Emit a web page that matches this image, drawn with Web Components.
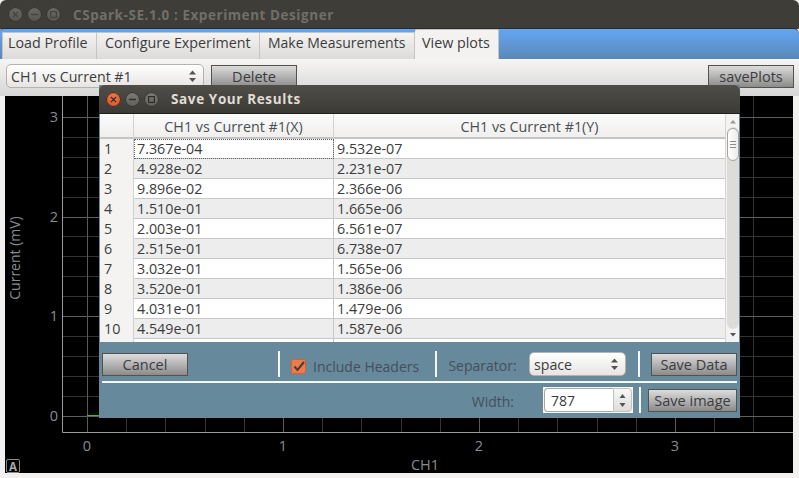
<!DOCTYPE html>
<html>
<head>
<meta charset="utf-8">
<title>CSpark-SE.1.0 : Experiment Designer</title>
<style>
html, body { margin: 0; padding: 0; height: 478px; overflow: hidden; background: #f2f1f0; }
body { font-family: "Open Sans", "Noto Sans", sans-serif; font-size: 14px; color: #3c3c3c; }
</style>
</head>
<body>
<app-window></app-window>
<script>
const UI_FONT = '"Open Sans", "Noto Sans", sans-serif';

// three round window buttons
class WinButtons extends HTMLElement {
    constructor() {
        super();
        this.attachShadow({mode: 'open'});
        const active = this.hasAttribute('active');
        const a = active ? '#2f2e2a' : '#44433f';
        const grey = active ? 'linear-gradient(#7d7c76, #5f5e59)' : 'linear-gradient(#6a6964, #565550)';
        this.shadowRoot.innerHTML = `
        <style>
        :host { display: flex; gap: 4px; align-items: center; }
        .b { width: 15px; height: 15px; border-radius: 50%; background: ${grey}; box-shadow: 0 0 0 1px #33322e inset; flex: none; display: block; }
        .b.close { background: ${active ? 'radial-gradient(circle at 50% 35%, #f0784a, #d8481f)' : grey}; }
        svg { display: block; }
        </style>
        <span class="b close"><svg width="15" height="15" fill="none" stroke="${a}" stroke-width="1.2"><path d="M5 5l5 5M10 5l-5 5"/></svg></span>
        <span class="b"><svg width="15" height="15" fill="none" stroke="${a}" stroke-width="1.4"><path d="M4 7.5h7"/></svg></span>
        <span class="b"><svg width="15" height="15" fill="none" stroke="${a}" stroke-width="1.2"><rect x="4.6" y="4.6" width="5.8" height="5.8"/></svg></span>`;
    }
}
customElements.define('win-buttons', WinButtons);

class QtButton extends HTMLElement {
    constructor() {
        super();
        this.attachShadow({mode: 'open'});
        this.shadowRoot.innerHTML = `
        <style>
        :host { display: flex; align-items: center; justify-content: center; box-sizing: border-box; flex: none;
            height: 23px; border: 1px solid #55524e; background: linear-gradient(#dcdcdc, #8b8b8b); color: #3c3c3c;
            font: 14.5px ${UI_FONT}; white-space: nowrap; }
        </style>
        <slot></slot>`;
    }
}
customElements.define('qt-button', QtButton);

// combo box with the small up/down arrows
class ComboBox extends HTMLElement {
    constructor() {
        super();
        this.attachShadow({mode: 'open'});
        this.shadowRoot.innerHTML = `
        <style>
        :host { display: flex; align-items: center; justify-content: space-between; box-sizing: border-box; flex: none;
            height: 24px; padding: 0 6px 0 4px; border: 1px solid #b5b2ac; border-radius: 5px;
            background: linear-gradient(#ffffff, #e6e5e3); color: #3c3c3c; font: 14.2px ${UI_FONT}; white-space: nowrap; }
        svg { display: block; flex: none; }
        </style>
        <slot></slot>
        <svg width="9" height="14" fill="#55534f"><path d="M4.5 1.5L8 5.5H1zM1 9h7l-3.500 4z"/></svg>`;
    }
}
customElements.define('combo-box', ComboBox);

class SpinBox extends HTMLElement {
    constructor() {
        super();
        this.attachShadow({mode: 'open'});
        this.shadowRoot.innerHTML = `
        <style>
        :host { display: flex; box-sizing: border-box; flex: none; width: 90px; height: 26px; padding: 1px; background: #f6f6f5;
            color: #3c3c3c; font: 14px ${UI_FONT}; }
        .edit { flex: 1; box-sizing: border-box; border: 1px solid #a9a69f; border-right: 0; border-radius: 4px 0 0 4px; background: #fff; padding-left: 6px; line-height: 24px; }
        .arrows { width: 17px; border: 1px solid #c4c2bc; border-radius: 0 4px 4px 0; background: linear-gradient(#f8f8f7, #dddcd9); display: flex; align-items: center; justify-content: center; }
        svg { display: block; }
        </style>
        <div class="edit"><slot></slot></div>
        <div class="arrows"><svg width="9" height="18" fill="#55534f"><path d="M4.500 3L7.500 7H1.500zM1.500 12h6l-3 4z"/></svg></div>`;
    }
}
customElements.define('spin-box', SpinBox);

class VRule extends HTMLElement {
    constructor() {
        super();
        this.attachShadow({mode: 'open'});
        this.shadowRoot.innerHTML = `<style>:host { display: block; flex: none; width: 2px; height: 26px; background: #f4f6f7; }</style>`;
    }
}
customElements.define('v-rule', VRule);

class TabBar extends HTMLElement {
    constructor() {
        super();
        this.attachShadow({mode: 'open'});
        this.shadowRoot.innerHTML = `
        <style>
        :host { display: flex; align-items: flex-end; box-sizing: border-box; height: 31px; padding: 0 3px 0 2px; margin-top: -1px;
            background: linear-gradient(#64a6f5, #5a88b4); border-top: 1px solid #2a2925; border-radius: 4px 6px 0 0; }
        .tab { box-sizing: border-box; height: 27px; padding: 0 6px 0 7px; background: linear-gradient(#f4f3f2, #dcdbd9);
            border: 1px solid #c6c4bf; border-bottom: 0; border-left: 0; font: 14.3px ${UI_FONT}; color: #3c3c3c; white-space: nowrap; }
        .tab.on { height: 30px; background: #f3f2f1; border-radius: 2px 2px 0 0; padding: 3px 0 0 7px; }
        </style>
        <div class="tab" style="width:95px;padding-left:5px;border-left:1px solid #c6c4bf">Load Profile</div>
        <div class="tab" style="width:163px;padding-left:8px">Configure Experiment</div>
        <div class="tab" style="width:155px;padding-left:8px;font-size:14px">Make Measurements</div>
        <div class="tab on" style="width:84px">View plots</div>`;
    }
}
customElements.define('tab-bar', TabBar);

// the dark plot, drawn on its own canvas of coordinates
class PlotView extends HTMLElement {
    constructor() {
        super();
        this.attachShadow({mode: 'open'});
        let grid = '';
        // origin of the svg is page (5,96)
        for (let i = 1; i < 18; i++) {
            const x = 82 + i * 39.2;
            const major = i % 5 === 0;
            grid += `<path d="M${Math.round(x) + .5} 0V336" stroke="${major ? '#5a5a5a' : '#333'}"/>`;
        }
        for (let i = 0; i < 16; i++) {
            const y = 320 - i * 19.95;
            const major = i % 5 === 0;
            grid += `<path d="M57 ${Math.round(y) + .5}H788" stroke="${major ? '#5f5f5f' : '#333'}"/>`;
        }
        this.shadowRoot.innerHTML = `
        <style>
        :host { display: block; flex: none; width: 788px; height: 377px; background: #000; }
        svg { display: block; overflow: visible; }
        text { font-family: ${UI_FONT}; font-size: 14.500px; fill: #868b92; }
        </style>
        <svg width="788" height="377">
            ${grid}
            <path d="M82.500 0V336" stroke="#5a5a5a"/>
            <path d="M57.500 0V336.500H788" fill="none" stroke="#9a9a9a"/>
            <path d="M82 319.500H94" stroke="#2fc22f"/>
            <text x="53" y="26" text-anchor="end">3</text>
            <text x="53" y="126" text-anchor="end">2</text>
            <text x="53" y="225" text-anchor="end">1</text>
            <text x="53" y="325" text-anchor="end">0</text>
            <text x="82" y="355" text-anchor="middle">0</text>
            <text x="278" y="355" text-anchor="middle">1</text>
            <text x="474" y="355" text-anchor="middle">2</text>
            <text x="670" y="355" text-anchor="middle">3</text>
            <text x="420" y="374" text-anchor="middle">CH1</text>
            <text transform="translate(15 162) rotate(-90)" text-anchor="middle" style="font-size:14px">Current (mV)</text>
            <rect x="1.500" y="363.500" width="13" height="13" rx="1.500" fill="none" stroke="#8a8a8a"/>
            <text x="8" y="374.500" text-anchor="middle" style="font-size:11.500px;font-weight:700;fill:#a8a8a8">A</text>
        </svg>`;
    }
}
customElements.define('plot-view', PlotView);

// spreadsheet with header, row numbers and a scrollbar
class DataTable extends HTMLElement {
    constructor() {
        super();
        this.attachShadow({mode: 'open'});
        const data = [
            ['7.367e-04', '9.532e-07'], ['4.928e-02', '2.231e-07'], ['9.896e-02', '2.366e-06'],
            ['1.510e-01', '1.665e-06'], ['2.003e-01', '6.561e-07'], ['2.515e-01', '6.738e-07'],
            ['3.032e-01', '1.565e-06'], ['3.520e-01', '1.386e-06'], ['4.031e-01', '1.479e-06'],
            ['4.549e-01', '1.587e-06'], ['', '']
        ];
        const rows = data.map((r, i) => `
            <div class="row ${i % 2 ? 'alt' : ''}">
                <div class="num">${i < 10 ? i + 1 : ''}</div>
                <div class="c1 ${i === 0 ? 'focus' : ''}">${r[0]}</div>
                <div class="c2">${r[1]}</div>
            </div>`).join('');
        this.shadowRoot.innerHTML = `
        <style>
        :host { display: flex; flex: none; height: 228px; margin: 0 1px; background: #fff; overflow: hidden; font: 14.300px ${UI_FONT}; color: #3c3c3c; }
        .grid { flex: 1; min-width: 0; overflow: hidden; }
        .head { display: grid; grid-template-columns: 34px 200px 1fr; height: 25px; box-sizing: border-box; border-bottom: 2px solid #c4c4c4; background: linear-gradient(#fbfbfb, #f0efee); color: #4a4f55; text-align: center; line-height: 25px; }
        .head div { box-sizing: border-box; border-right: 1px solid #d2d2d2; }
        .head div:last-child { border-right: 0; }
        .row { display: grid; grid-template-columns: 34px 200px 1fr; height: 20px; box-sizing: border-box; border-bottom: 1px solid #c8c8c8; line-height: 20px; background: #fff; }
        .row.alt { background: #ededed; }
        .num { background: #f4f3f2; padding-left: 4px; border-right: 1px solid #d2d2d2; }
        .c1 { padding-left: 3px; border-right: 1px solid #c8c8c8; box-sizing: border-box; }
        .c2 { padding-left: 3px; }
        .focus { outline: 1px dotted #666; outline-offset: -1px; }
        .bar { width: 14px; flex: none; box-sizing: border-box; border-left: 1px solid #d8d6d2; background: #f4f3f2; display: flex; flex-direction: column; align-items: center; }
        .bar svg { display: block; flex: none; }
        .trough { flex: 1; width: 12px; background: #dedcd8; border-radius: 6px; }
        .thumb { box-sizing: border-box; width: 12px; height: 33px; margin-top: 1px; border: 1px solid #a8a59f; border-radius: 6px; background: linear-gradient(90deg, #fff, #ecebe9); display: flex; align-items: center; justify-content: center; }
        .step { height: 13px; }
        </style>
        <div class="grid">
            <div class="head"><div></div><div>CH1 vs Current #1(X)</div><div>CH1 vs Current #1(Y)</div></div>
            ${rows}
        </div>
        <div class="bar">
            <svg class="step" width="12" height="13" fill="#9a9893"><path d="M6 6l3 3.500H3z"/></svg>
            <div class="trough"><div class="thumb"><svg width="6" height="7" stroke="#8d8b86"><path d="M0 .5H6M0 3.500H6M0 6.500H6"/></svg></div></div>
            <svg class="step" width="12" height="13" fill="#55534f"><path d="M3 4h6l-3 3.500z"/></svg>
        </div>`;
    }
}
customElements.define('data-table', DataTable);

class SaveDialog extends HTMLElement {
    constructor() {
        super();
        this.attachShadow({mode: 'open'});
        this.shadowRoot.innerHTML = `
        <style>
        :host { position: absolute; left: 99px; top: 85px; width: 641px; height: 333px; background: #66899b; display: flex; flex-direction: column; font: 14px ${UI_FONT}; }
        .title { display: flex; align-items: center; flex: none; height: 29px; box-sizing: border-box; padding: 0 0 0 7px; background: linear-gradient(#504e47, #3b3a36); border-radius: 6px 6px 0 0; border-bottom: 1px solid #1f1e1b; color: #e0ddd6; font-weight: 700; font-size: 13.500px; letter-spacing: .62px; }
        .title span { margin-left: 12px; }
        .lab { color: #44505a; white-space: nowrap; }
        .r1 { display: flex; align-items: center; flex: none; box-sizing: border-box; height: 39px; padding: 5px 3px 0; }
        .line { flex: none; height: 2px; margin: 0 3px 0 3px; background: #f4f6f7; }
        .r2 { display: flex; align-items: center; flex: none; box-sizing: border-box; height: 35px; padding: 0 3px 1px; justify-content: flex-end; }
        .check { box-sizing: border-box; width: 15px; height: 15px; background: #ee7b4e; border: 1px solid #d0623a; border-radius: 2px; flex: none; margin: 4px 7px 0 11px; }
        .check svg { display: block; }
        </style>
        <div class="title"><win-buttons active></win-buttons><span>Save Your Results</span></div>
        <data-table></data-table>
        <div class="r1">
            <qt-button style="width:86px">Cancel</qt-button>
            <v-rule style="margin-left:90px"></v-rule>
            <div class="check"><svg width="13" height="13" fill="none" stroke="#4a3b33" stroke-width="2"><path d="M2.500 6.500l3 3.500L12 2"/></svg></div>
            <div class="lab" style="width:108px;margin-top:5px">Include Headers</div>
            <v-rule style="margin-left:15px"></v-rule>
            <div class="lab" style="margin-left:11px;width:81px;margin-top:2px">Separator:</div>
            <combo-box style="width:97px">space</combo-box>
            <v-rule style="margin-left:12px"></v-rule>
            <qt-button style="width:86px;margin-left:11px">Save Data</qt-button>
        </div>
        <div class="line"></div>
        <div class="r2">
            <div class="lab" style="margin-right:29px;margin-top:2px">Width:</div>
            <spin-box>787</spin-box>
            <v-rule style="margin-left:6px"></v-rule>
            <qt-button style="width:89px;margin-left:7px">Save image</qt-button>
        </div>`;
    }
}
customElements.define('save-dialog', SaveDialog);

class AppWindow extends HTMLElement {
    constructor() {
        super();
        this.attachShadow({mode: 'open'});
        this.shadowRoot.innerHTML = `
        <style>
        :host { display: flex; flex-direction: column; width: 799px; height: 478px; position: relative; background: #f2f1f0; overflow: hidden; font: 14px ${UI_FONT}; }
        .title { display: flex; align-items: center; flex: none; height: 29px; box-sizing: border-box; padding-left: 8px; background: #3e3d38; border-radius: 6px 6px 0 0; color: #716f69; font-weight: 700; font-size: 13.500px; letter-spacing: .55px; }
        .title span { margin-left: 12px; }
        .tools { display: flex; align-items: center; flex: none; height: 37px; box-sizing: border-box; padding: 0 5px 3px 6px; background: linear-gradient(#f6f5f4, #d6d6d6); }
        .tools .grow { flex: 1; }
        plot-view { margin: 0 0 0 5px; }
        </style>
        <div class="title"><win-buttons></win-buttons><span>CSpark-SE.1.0 : Experiment Designer</span></div>
        <tab-bar></tab-bar>
        <div class="tools">
            <combo-box style="width:198px">CH1 vs Current #1</combo-box>
            <qt-button style="width:86px;margin-left:7px">Delete</qt-button>
            <div class="grow"></div>
            <qt-button style="width:86px">savePlots</qt-button>
        </div>
        <plot-view></plot-view>
        <save-dialog></save-dialog>`;
    }
}
customElements.define('app-window', AppWindow);
</script>
</body>
</html>
